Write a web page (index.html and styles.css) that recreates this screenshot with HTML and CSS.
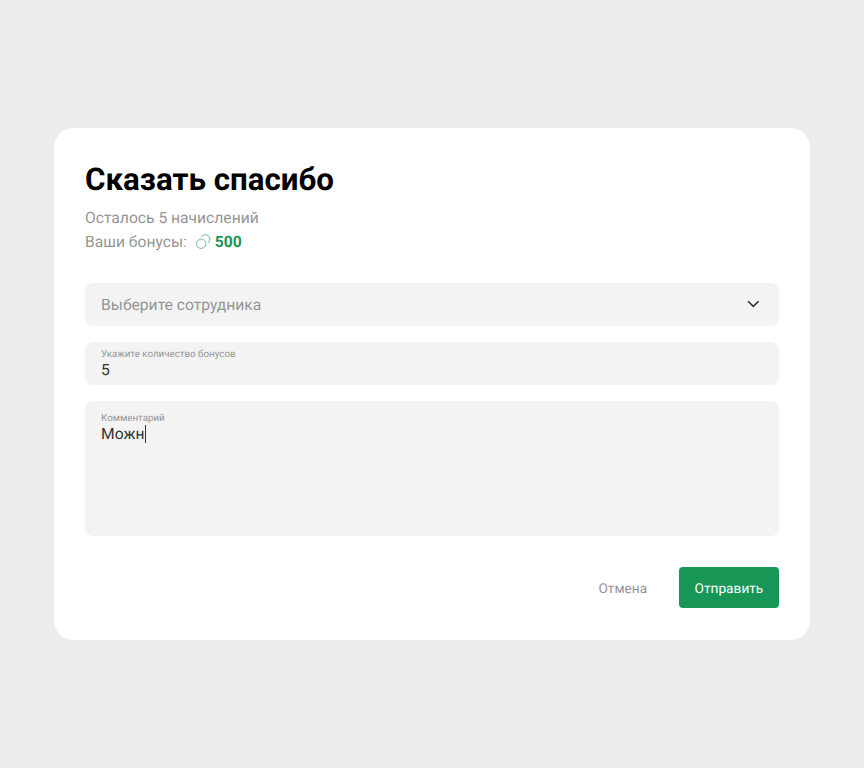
FILE: index.html
```html
<!DOCTYPE html>
<html lang="ru">
<head>
    <meta charset="UTF-8">
    <title>Сказать спасибо</title>
    <link rel="stylesheet" href="styles.css">
</head>
<body>
<form class="modal">
    <h1 class="title">Сказать спасибо</h1>
    <p class="info">Осталось 5 начислений</p>
    <p class="info">
        <span>Ваши бонусы:</span>
        <svg class="coins" width="16" height="16" viewBox="0 0 16 16" fill="none" stroke="#189656" stroke-width="0.6">
            <circle cx="6.2" cy="9.7" r="4.7"/>
            <path d="M6.2 3.1A4.6 4.6 0 1 1 12.9 9"/>
        </svg>
        <b class="bonus">500</b>
    </p>

    <div class="field select">
        <span>Выберите сотрудника</span>
        <svg class="arrow" width="14" height="8" viewBox="0 0 14 8" fill="none" stroke="#333" stroke-width="1.6">
            <path d="M2 1.2L7.3 6.4L12.6 1.2"/>
        </svg>
    </div>
    <div class="field">
        <label class="label">Укажите количество бонусов</label>
        <div class="value">5</div>
    </div>
    <div class="field comment">
        <label class="label">Комментарий</label>
        <div class="value">Можн<span class="caret"></span></div>
    </div>

    <div class="buttons">
        <button type="button" class="btn">Отмена</button>
        <button type="button" class="btn btn-green">Отправить</button>
    </div>
</form>
</body>
</html>
```
FILE: styles.css
```css
* {
    box-sizing: border-box;
}
body {
    margin: 0;
    height: 768px;
    display: flex;
    justify-content: center;
    align-items: center;
    background-color: #ececec;
    font-family: Roboto, "Liberation Sans", sans-serif;
    color: #333;
    text-rendering: geometricPrecision;
}
.modal {
    width: 756px;
    height: 512px;
    padding: 33px 31px 31px;
    border-radius: 20px;
    background-color: #fff;
}
.title {
    margin: 0 0 7px;
    font-size: 31.3px;
    line-height: 38px;
    color: #000;
}
.info {
    display: flex;
    align-items: center;
    margin: 0 0 1px;
    font-size: 15.65px;
    line-height: 23px;
    color: #959595;
}
.coins {
    margin: 1px 4px 0 8px;
}
.bonus {
    color: #189656;
}
.field {
    height: 43px;
    margin-top: 16px;
    padding: 7px 16px;
    border-radius: 8px;
    background-color: #f3f3f3;
}
.select {
    display: flex;
    justify-content: space-between;
    align-items: center;
    margin-top: 30px;
    padding: 6px 19px 6px 16px;
    font-size: 15.65px;
    color: #959595;
}
.arrow {
    margin-bottom: 1px;
}
.comment {
    height: 135px;
    padding-top: 12px;
}
.label {
    display: block;
    font-size: 9.78px;
    line-height: 12px;
    color: #959595;
}
.value {
    display: flex;
    align-items: center;
    font-size: 15.65px;
    line-height: 17px;
}
.caret {
    width: 1px;
    height: 18px;
    margin: 0 0 -1px 1px;
    background-color: #333;
}
.buttons {
    display: flex;
    justify-content: flex-end;
    gap: 16px;
    margin-top: 31px;
}
.btn {
    height: 41px;
    padding: 2px 15.7px 0;
    border: none;
    border-radius: 4px;
    background: none;
    font: 13.7px Roboto, sans-serif;
    color: #959595;
    text-rendering: geometricPrecision;
}
.btn-green {
    background-color: #189656;
    color: #fff;
}
```
